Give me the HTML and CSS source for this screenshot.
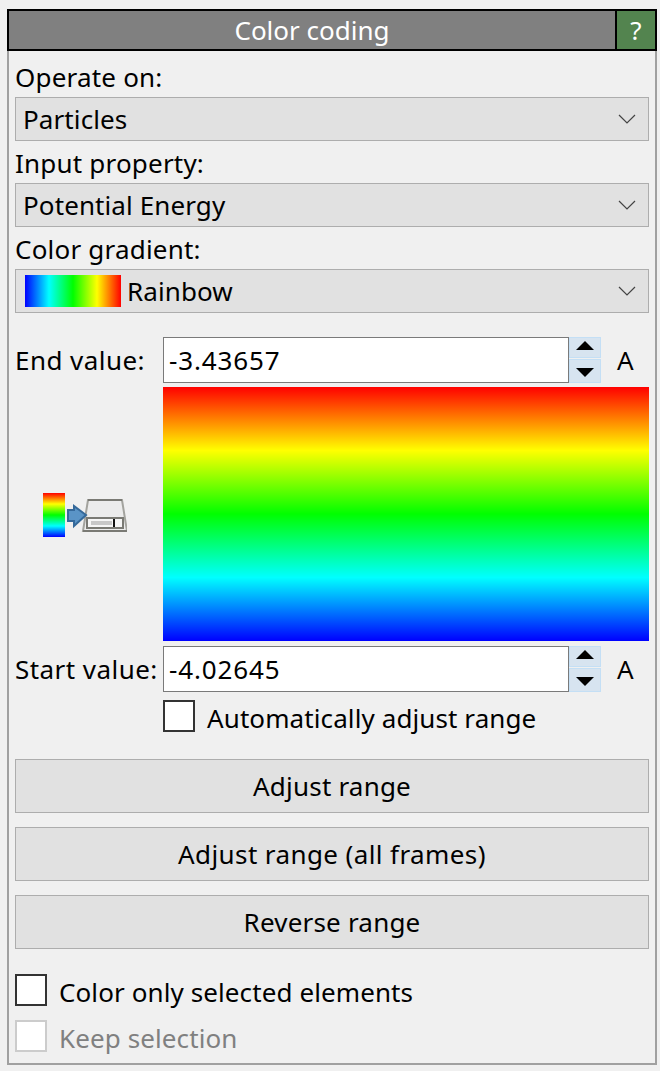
FILE: index.html
```html
<!DOCTYPE html>

<html>
<head>
    <meta charset="utf-8">
    <title>Color coding</title>
    <link rel="stylesheet" href="styles.css">
</head>
<body>

    <div class="rollout">
        <div class="rollout-title">
            <div class="title-text">Color coding</div>
            <div class="help-btn">?</div>
        </div>

        <div class="rollout-body">
            <div class="label">Operate on:</div>
            <div class="combo">
                <span>Particles</span>
                <svg class="chevron" width="18" height="10" viewBox="0 0 18 10"><path d="M1 1 L9 9 L17 1" fill="none" stroke="#444" stroke-width="1.2"/></svg>
            </div>

            <div class="label">Input property:</div>
            <div class="combo">
                <span>Potential Energy</span>
                <svg class="chevron" width="18" height="10" viewBox="0 0 18 10"><path d="M1 1 L9 9 L17 1" fill="none" stroke="#444" stroke-width="1.2"/></svg>
            </div>

            <div class="label">Color gradient:</div>
            <div class="combo combo-gradient">
                <div class="swatch"></div>
                <span>Rainbow</span>
                <svg class="chevron" width="18" height="10" viewBox="0 0 18 10"><path d="M1 1 L9 9 L17 1" fill="none" stroke="#444" stroke-width="1.2"/></svg>
            </div>

            <!-- value range -->
            <div class="range">
                <div class="range-label">End value:</div>
                <div class="spin-input">-3.43657</div>
                <div class="spinner">
                    <div class="spin-btn spin-up"><svg width="18" height="9" viewBox="0 0 18 9"><path d="M9 0 L18 9 L0 9 Z" fill="#000"/></svg></div>
                    <div class="spin-btn spin-down"><svg width="18" height="9" viewBox="0 0 18 9"><path d="M0 0 L18 0 L9 9 Z" fill="#000"/></svg></div>
                </div>
                <div class="unit">A</div>

                <div class="export-icon">
                    <div class="mini-gradient"></div>
                    <svg width="62" height="44" viewBox="0 0 62 44">
                        <path d="M23 7 L18 38 H62 L57 7 Z" fill="#ececec" stroke="#a3a39e" stroke-width="2"/>
                        <path d="M23 7 H57" fill="none" stroke="#7a7a74" stroke-width="2"/>
                        <path d="M18 38 H62" fill="none" stroke="#7a7a74" stroke-width="2"/>
                        <rect x="22" y="25" width="36" height="10" fill="#f6f6f6" stroke="#7a7a74" stroke-width="2"/>
                        <rect x="26" y="28" width="21" height="4" fill="#c8c8c8"/>
                        <rect x="48" y="26" width="2" height="8" fill="#111"/>
                        <path d="M3 17 H9 V13 L21 22 L9 33 V28 H3 Z" fill="#5a94c6" stroke="#35699a" stroke-width="2"/>
                    </svg>
                </div>
                <div class="gradient-view"></div>

                <div class="range-label">Start value:</div>
                <div class="spin-input">-4.02645</div>
                <div class="spinner">
                    <div class="spin-btn spin-up"><svg width="18" height="9" viewBox="0 0 18 9"><path d="M9 0 L18 9 L0 9 Z" fill="#000"/></svg></div>
                    <div class="spin-btn spin-down"><svg width="18" height="9" viewBox="0 0 18 9"><path d="M0 0 L18 0 L9 9 Z" fill="#000"/></svg></div>
                </div>
                <div class="unit">A</div>

                <div class="check auto-check">
                    <span class="box"></span>
                    <span class="check-text">Automatically adjust range</span>
                </div>
            </div>

            <div class="buttons">
                <div class="btn">Adjust range</div>
                <div class="btn btn-wide">Adjust range (all frames)</div>
                <div class="btn">Reverse range</div>
            </div>

            <div class="checks">
                <div class="check">
                    <span class="box"></span>
                    <span class="check-text">Color only selected elements</span>
                </div>
                <div class="check disabled">
                    <span class="box"></span>
                    <span class="check-text">Keep selection</span>
                </div>
            </div>
        </div>
    </div>

</body>
</html>
```

FILE: styles.css
```css
body {
    margin: 0;
    background: #f0f0f0;
    font-family: "Noto Sans", "Open Sans", sans-serif;
    font-size: 26px;
    letter-spacing: 0.1px;
    color: #000;
}

.rollout {
    margin: 9px 3px 0 7px;
    width: 650px;
}

/* title bar */
.rollout-title {
    display: flex;
    height: 42px;
    box-sizing: border-box;
    border: 2px solid #000;
    color: #fff;
}

.title-text {
    flex: 1;
    background: #808080;
    text-align: center;
    line-height: 38px;
    letter-spacing: 0;
}

.help-btn {
    width: 38px;
    background: #53844f;
    border-left: 2px solid #000;
    text-align: center;
    line-height: 38px;
}

.rollout-body {
    height: 1014px;
    box-sizing: border-box;
    border: solid #a0a0a0;
    border-width: 0 2px 2px 2px;
    padding: 4px 6px 0 6px;
}

.label {
    height: 42px;
    line-height: 44px;
    letter-spacing: 0.2px;
}

.combo {
    height: 44px;
    box-sizing: border-box;
    border: 1px solid #adadad;
    background: #e1e1e1;
    padding: 0 12px 0 7px;
    display: flex;
    align-items: center;
    line-height: 42px;
}

.combo span {
    flex: 1;
}

.swatch {
    width: 96px;
    height: 32px;
    margin: 0 6px 0 2px;
    background: linear-gradient(to right, #0000ff, #00ffff 25%, #00ff00 50%, #ffff00 75%, #ff0000);
}

/* range grid */
.range {
    display: grid;
    grid-template-columns: 148px 406px 32px 48px;
    grid-template-rows: 46px 255px 46px 40px;
    row-gap: 4px;
    margin-top: 24px;
    align-items: center;
}

.range-label {
    letter-spacing: 0.45px;
    line-height: 48px;
}

.spin-input {
    height: 46px;
    box-sizing: border-box;
    border: 1px solid #7a7a7a;
    background: #fff;
    padding-left: 5px;
    line-height: 45px;
    letter-spacing: 0.85px;
}

.spinner {
    height: 46px;
    display: flex;
    flex-direction: column;
    gap: 1px;
}

.spin-btn {
    box-sizing: border-box;
    border: 1px solid #c4dff5;
    background: #d7e4f0;
    display: flex;
    align-items: center;
    justify-content: center;
}

.spin-up {
    height: 21px;
    padding-bottom: 4px;
}

.spin-down {
    height: 24px;
    padding-top: 2px;
}

.unit {
    padding-left: 16px;
    line-height: 48px;
}

.export-icon {
    display: flex;
    align-self: start;
    align-items: center;
    height: 254px;
    box-sizing: border-box;
    padding: 2px 0 0 28px;
}

.mini-gradient {
    width: 22px;
    height: 44px;
    flex: none;
    background: linear-gradient(to bottom, #ff0000, #ffff00 25%, #00ff00 50%, #00ffff 75%, #0000ff);
}

.gradient-view {
    grid-column: 2 / 5;
    align-self: start;
    height: 254px;
    background: linear-gradient(to bottom, #ff0000, #ffff00 25%, #00ff00 50%, #00ffff 75%, #0000ff);
}

.check {
    display: flex;
    align-items: center;
    gap: 12px;
    height: 32px;
}

.check-text {
    padding-top: 3px;
}

.auto-check {
    grid-column: 2 / 5;
    align-self: start;
    margin-top: 4px;
}

.box {
    width: 32px;
    height: 32px;
    box-sizing: border-box;
    border: 2px solid #333;
    background: #fff;
    flex: none;
}

.disabled {
    color: #808080;
}

.disabled .box {
    border-color: #ccc;
}

/* buttons */
.buttons {
    display: flex;
    flex-direction: column;
    gap: 14px;
    margin-top: 23px;
}

.btn {
    height: 54px;
    box-sizing: border-box;
    border: 1px solid #adadad;
    background: #e1e1e1;
    text-align: center;
    line-height: 53px;
    letter-spacing: 0.2px;
}

.btn-wide {
    letter-spacing: 0.4px;
}

.checks {
    display: flex;
    flex-direction: column;
    gap: 14px;
    margin-top: 25px;
}
```
